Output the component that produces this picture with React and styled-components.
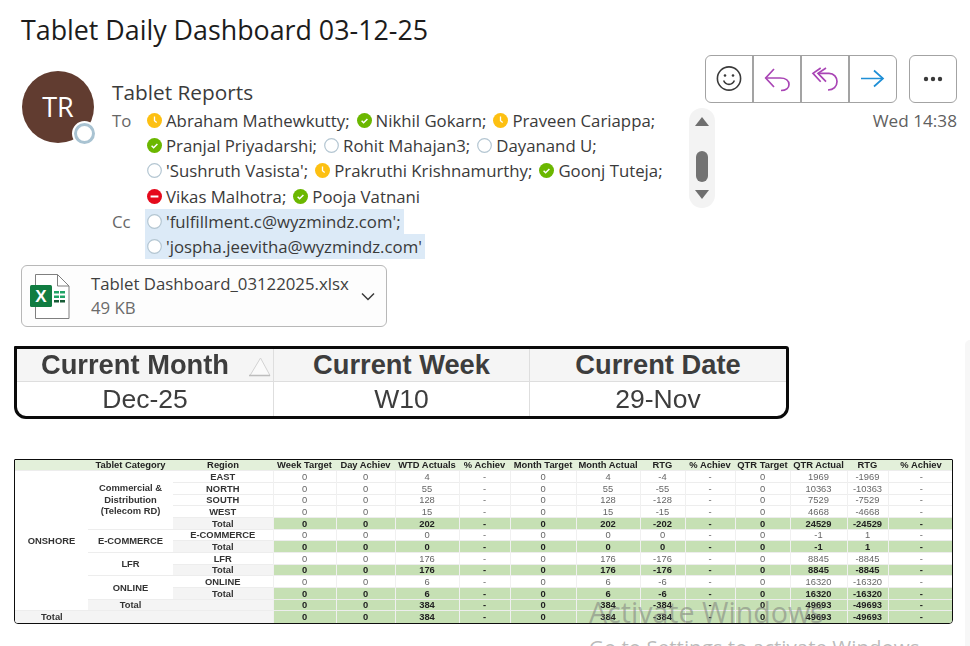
import React from 'react';
import styled, {createGlobalStyle} from 'styled-components';

const GlobalStyle = createGlobalStyle`
	html, body {
		margin: 0;
		padding: 0;
		background: #fff;
		overflow: hidden;
	}
	#root {
		height: 646px;
	}
`;

const Page = styled.div`
	position: relative;
	width: 970px;
	height: 646px;
	overflow: hidden;
	font-family: "Open Sans", "Noto Sans", sans-serif;
	color: #242424;
`;

const Title = styled.h1`
	margin: 0;
	padding: 12px 0 0 21px;
	height: 55px;
	box-sizing: border-box;
	font-size: 26.8px;
	line-height: 36px;
	font-weight: 400;
	color: #1c1c1c;
`;

const Header = styled.div`
	display: flex;
	padding-left: 22px;
	padding-right: 13px;
`;

const Avatar = styled.div`
	position: relative;
	flex: none;
	width: 72px;
	height: 72px;
	margin-top: 16px;
	margin-right: 18px;
	border-radius: 50%;
	background: #613c30;
	color: #fff;
	font-size: 27px;
	line-height: 72px;
	text-align: center;
`;

const AvatarStatus = styled.span`
	position: absolute;
	right: -1px;
	bottom: -1px;
	width: 15px;
	height: 15px;
	border-radius: 50%;
	border: 3px solid #a9c3d2;
	background: #fff;
	box-shadow: 0 0 0 2px #fff;
`;

const Main = styled.div`
	flex: 1;
	min-width: 0;
`;

const SenderRow = styled.div`
	display: flex;
	justify-content: space-between;
	height: 53px;
`;

const Sender = styled.div`
	align-self: flex-end;
	font-size: 20.8px;
	line-height: 26px;
	margin-bottom: 3px;
	color: #3b3b3b;
`;

const Actions = styled.div`
	display: flex;
	gap: 12px;
	height: 48px;
`;

const ButtonGroup = styled.div`
	display: flex;
	box-sizing: border-box;
	width: ${p => p.$width}px;
	border: 1px solid #a3a3a3;
	border-radius: 6px;
	background: #fff;
	overflow: hidden;
`;

const ActionButton = styled.div`
	display: flex;
	flex: 1;
	align-items: center;
	justify-content: center;
	border-left: ${p => (p.$first ? 'none' : '2px solid #a3a3a3')};
`;

const RecipientsRow = styled.div`
	display: flex;
	justify-content: space-between;
`;

const Recipients = styled.div`
	position: relative;
	width: 603px;
	height: 152px;
`;

const Scrollbar = styled.div`
	position: absolute;
	top: 0;
	right: 0;
	width: 26px;
	height: 100px;
	border-radius: 13px;
	background: #f3f3f3;
	display: flex;
	flex-direction: column;
	align-items: center;
`;

const ArrowUp = styled.span`
	margin-top: 9px;
	width: 0;
	height: 0;
	border-left: 7px solid transparent;
	border-right: 7px solid transparent;
	border-bottom: 9px solid #6f6f6f;
`;

const ScrollThumb = styled.span`
	margin-top: 25px;
	width: 12px;
	height: 31px;
	border-radius: 6px;
	background: #737373;
`;

const ArrowDown = styled.span`
	margin-top: 8px;
	width: 0;
	height: 0;
	border-left: 7px solid transparent;
	border-right: 7px solid transparent;
	border-top: 9px solid #6f6f6f;
`;

const Line = styled.div`
	display: flex;
	align-items: center;
	height: 25.2px;
	font-size: 16.8px;
	color: #3a3a3a;
`;

const FieldLabel = styled.span`
	flex: none;
	width: 33px;
	color: #666;
`;

const Person = styled.span`
	display: inline-flex;
	align-items: center;
	gap: 4px;
	margin-right: 5px;
	padding-left: 2px;
	padding-right: ${p => (p.$selected ? '3px' : '0')};
	height: 100%;
	white-space: pre;
	background: ${p => (p.$selected ? '#dceaf7' : 'transparent')};
`;

const Time = styled.div`
	font-size: 17.2px;
	line-height: 26px;
	color: #5f5f5f;
`;

const Attachment = styled.div`
	display: flex;
	align-items: center;
	box-sizing: border-box;
	width: 366px;
	height: 62px;
	margin: 5px 0 0 21px;
	padding: 0 11px 0 8px;
	border: 1px solid #b8b8b8;
	border-radius: 6px;
	background: #fdfdfd;
`;

const FileText = styled.div`
	flex: 1;
	margin-left: 21px;
	font-size: 16.8px;
	line-height: 24px;
	color: #3f3f3f;
`;

const FileSize = styled.div`
	color: #6b6b6b;
`;

const SummaryBox = styled.div`
	box-sizing: border-box;
	width: 775px;
	height: 73px;
	margin: 19px 0 0 14px;
	border: 3px solid #0a0a0a;
	border-radius: 1px 3px 12px 12px;
	overflow: hidden;
	font-family: "Liberation Sans", Arial, sans-serif;
	filter: blur(0.4px);
`;

const SummaryGrid = styled.div`
	display: grid;
	grid-template-columns: 256px 256px 1fr;
	grid-template-rows: 33px 1fr;
	height: 100%;
`;

const SummaryHead = styled.div`
	position: relative;
	display: flex;
	align-items: center;
	justify-content: center;
	padding-right: ${p => (p.$sorted ? '20px' : '0')};
	font-size: 27.3px;
	font-weight: 700;
	color: #3d3d3d;
	background: #f5f5f5;
	border-bottom: 1px solid #dedede;
	border-left: ${p => (p.$first ? 'none' : '1px solid #dedede')};
`;

const SummaryCell = styled.div`
	display: flex;
	align-items: center;
	justify-content: center;
	font-size: 26.5px;
	color: #3d3d3d;
	border-left: ${p => (p.$first ? 'none' : '1px solid #dedede')};
`;

const SortMark = styled.svg`
	position: absolute;
	right: 2px;
	bottom: 4px;
`;

const BigTableBox = styled.div`
	box-sizing: border-box;
	width: 939px;
	height: 165px;
	margin: 40px 0 0 14px;
	border: 1px solid #0d0d0d;
	border-top-width: 1.5px;
	border-radius: 1px 1px 4px 4px;
	overflow: hidden;
	filter: blur(0.35px);
`;

const BigTable = styled.table`
	width: 100%;
	table-layout: fixed;
	border-collapse: collapse;
	font-family: "Liberation Sans", Arial, sans-serif;
	font-size: 9.4px;
	color: #555;
	text-align: center;

	tbody tr:nth-child(3n) {
		height: 11px;
	}
	tbody tr:last-child {
		height: 13px;
	}
`;

const HeadRow = styled.tr`
	height: 10px;
	background: #e3f0da;
`;

const Row = styled.tr`
	height: 12px;
`;

const HeadCell = styled.th`
	padding: 0;
	font-weight: 700;
	color: #222;
	white-space: nowrap;
	line-height: 9px;
`;

const Cell = styled.td`
	padding: 0;
	line-height: 9px;
	border-top: 1px solid #ededed;
	border-left: 1px solid #f0f0f0;
	white-space: nowrap;
	background: ${p => (p.$total ? '#c6e0b4' : 'transparent')};
	font-weight: ${p => (p.$total ? 700 : 400)};
	color: ${p => (p.$total ? '#222' : '#666')};
`;

const GroupCell = styled.td`
	padding: 0;
	padding-left: ${p => p.$indent || 0}px;
	font-weight: 700;
	line-height: 9px;
	color: #333;
	white-space: nowrap;
	border-top: 1px solid #ededed;
	background: ${p => (p.$shade ? '#f4f4f4' : '#fff')};
	text-align: ${p => p.$align || 'center'};
`;

const GroupLines = styled.div`
	line-height: 11.5px;
`;

const Watermark = styled.div`
	position: absolute;
	left: 589px;
	top: 594px;
	color: rgba(120, 120, 120, 0.5);
	pointer-events: none;
`;

const WatermarkTitle = styled.div`
	font-size: 28.6px;
	line-height: 36px;
`;

const WatermarkSub = styled.div`
	margin-top: 3px;
	font-size: 20.5px;
	line-height: 28px;
	white-space: nowrap;
`;

const PageEdge = styled.div`
	position: absolute;
	right: 0;
	top: 340px;
	bottom: 0;
	width: 5px;
	border-top-left-radius: 5px;
	background: #f7f7f7;
`;

// presence dot next to each recipient
const Presence = ({status}) => {
	if (status === 'away') {
		return (
			<svg width="15" height="15" viewBox="0 0 15 15">
				<circle cx="7.5" cy="7.5" r="7.5" fill="#fdc012" />
				<path d="M7.5 3.6v4.2l2.2 1.7" fill="none" stroke="#fff" strokeWidth="1.3" />
			</svg>
		);
	}
	if (status === 'on') {
		return (
			<svg width="15" height="15" viewBox="0 0 15 15">
				<circle cx="7.5" cy="7.5" r="7.5" fill="#6bb700" />
				<path d="M4.6 7.8l2 2 3.8-3.8" fill="none" stroke="#fff" strokeWidth="1.5" />
			</svg>
		);
	}
	if (status === 'dnd') {
		return (
			<svg width="15" height="15" viewBox="0 0 15 15">
				<circle cx="7.5" cy="7.5" r="7.5" fill="#e50a1c" />
				<rect x="3.6" y="6.5" width="7.8" height="2" fill="#fff" />
			</svg>
		);
	}
	return (
		<svg width="15" height="15" viewBox="0 0 15 15">
			<circle cx="7.5" cy="7.5" r="6.8" fill="#fff" stroke="#b4c6d2" strokeWidth="1.2" />
		</svg>
	);
};

const Smiley = () => (
	<svg width="28" height="28" viewBox="0 0 28 28" fill="none" stroke="#3a3a3a" strokeWidth="1.6">
		<circle cx="14" cy="13.500" r="11.6" />
		<circle cx="10" cy="10.500" r="1.3" fill="#3a3a3a" stroke="none" />
		<circle cx="18" cy="10.500" r="1.3" fill="#3a3a3a" stroke="none" />
		<path d="M8.600 15.500c1.200 2.600 3.100 3.900 5.400 3.900s4.200-1.300 5.400-3.900" />
	</svg>
);

const ReplyIcon = () => (
	<svg width="28" height="28" viewBox="0 0 28 28" fill="none" stroke="#a945b5" strokeWidth="1.7">
		<path d="M11 4L2.700 13l8.300 9" />
		<path d="M2.700 13H17c6 0 9 3 9 6.500s-3 6-8 6" />
	</svg>
);

const ReplyAllIcon = () => (
	<svg width="28" height="28" viewBox="0 0 28 28" fill="none" stroke="#a945b5" strokeWidth="1.7">
		<path d="M9.700 3L2 8.300l7.700 8.400" />
		<path d="M15 3L7 8.300l8 8.400" />
		<path d="M7 8.300h11c5 0 8 4 8 8.200 0 5-3.500 8.500-9 8.500" />
	</svg>
);

const ForwardIcon = () => (
	<svg width="28" height="28" viewBox="0 0 28 28" fill="none" stroke="#1f8fd6" strokeWidth="1.7">
		<path d="M2 13.500h22" />
		<path d="M15 5.500l9 8-9 8" />
	</svg>
);

const MoreIcon = () => (
	<svg width="20" height="6" viewBox="0 0 20 6" fill="#3a3a3a">
		<circle cx="3" cy="3" r="2.200" />
		<circle cx="10" cy="3" r="2.200" />
		<circle cx="17" cy="3" r="2.200" />
	</svg>
);

const ExcelIcon = () => (
	<svg width="40" height="45" viewBox="0 0 40 45">
		<path d="M5.500 .5h22l11.500 11.500v32.500h-33.500z" fill="#fff" stroke="#7f7f7f" />
		<path d="M27.500 .5v11.500h11.500" fill="none" stroke="#7f7f7f" />
		<g fill="#21a366">
			<rect x="24" y="17" width="5" height="2.500" />
			<rect x="30" y="17" width="5" height="2.500" />
			<rect x="24" y="21.500" width="5" height="2.500" />
			<rect x="30" y="21.500" width="5" height="2.500" />
		</g>
		<g fill="#185c37">
			<rect x="24" y="26" width="5" height="2.500" />
			<rect x="30" y="26" width="5" height="2.500" />
		</g>
		<rect x="0" y="11" width="22" height="22" rx="1.500" fill="#107c41" />
		<text x="11" y="28" textAnchor="middle" fontFamily="'Liberation Sans', Arial, sans-serif" fontWeight="700" fontSize="17" fill="#fff">X</text>
	</svg>
);

const Chevron = () => (
	<svg width="14" height="9" viewBox="0 0 14 9" fill="none" stroke="#3a3a3a" strokeWidth="1.500">
		<path d="M1 1.500l6 6 6-6" />
	</svg>
);

const toLines = [
	[['away', 'Abraham Mathewkutty;'], ['on', 'Nikhil Gokarn;'], ['away', 'Praveen Cariappa;']],
	[['on', 'Pranjal Priyadarshi;'], ['off', 'Rohit Mahajan3;'], ['off', 'Dayanand U;']],
	[['off', "'Sushruth Vasista';"], ['away', 'Prakruthi Krishnamurthy;'], ['on', 'Goonj Tuteja;']],
	[['dnd', 'Vikas Malhotra;'], ['on', 'Pooja Vatnani']],
];

const ccLines = ["'fulfillment.c@wyzmindz.com';", "'jospha.jeevitha@wyzmindz.com'"];

const colWidths = [73, 85, 100, 63, 59, 64, 51, 66, 64, 45, 50, 55, 57, 41, 66];

const headers = ['', 'Tablet Category', 'Region', 'Week Target', 'Day Achiev', 'WTD Actuals', '% Achiev', 'Month Target', 'Month Actual', 'RTG', '% Achiev', 'QTR Target', 'QTR Actual', 'RTG', '% Achiev'];

const metrics = (wtd, month, rtg, qtr, qrtg) => ['0', '0', wtd, '-', '0', month, rtg, '-', '0', qtr, qrtg, '-'];

const MetricCells = ({values, total}) => values.map((v, i) => (
	<Cell key={i} $total={total}>{v}</Cell>
));

const App = () => (
	<Page>
		<GlobalStyle />
		<Title>Tablet Daily Dashboard 03-12-25</Title>
		<Header>
			<Avatar>
				TR
				<AvatarStatus />
			</Avatar>
			<Main>
				<SenderRow>
					<Sender>Tablet Reports</Sender>
					<Actions>
						<ButtonGroup $width={192}>
							<ActionButton $first><Smiley /></ActionButton>
							<ActionButton><ReplyIcon /></ActionButton>
							<ActionButton><ReplyAllIcon /></ActionButton>
							<ActionButton><ForwardIcon /></ActionButton>
						</ButtonGroup>
						<ButtonGroup $width={48}>
							<ActionButton $first><MoreIcon /></ActionButton>
						</ButtonGroup>
					</Actions>
				</SenderRow>
				<RecipientsRow>
					<Recipients>
						{toLines.map((line, i) => (
							<Line key={i}>
								<FieldLabel>{i === 0 ? 'To' : ''}</FieldLabel>
								{line.map(([status, name]) => (
									<Person key={name}><Presence status={status} />{name}</Person>
								))}
							</Line>
						))}
						{ccLines.map((name, i) => (
							<Line key={name}>
								<FieldLabel>{i === 0 ? 'Cc' : ''}</FieldLabel>
								<Person $selected><Presence status="off" />{name}</Person>
							</Line>
						))}
						<Scrollbar>
							<ArrowUp />
							<ScrollThumb />
							<ArrowDown />
						</Scrollbar>
					</Recipients>
					<Time>Wed 14:38</Time>
				</RecipientsRow>
			</Main>
		</Header>
		<Attachment>
			<ExcelIcon />
			<FileText>
				Tablet Dashboard_03122025.xlsx
				<FileSize>49 KB</FileSize>
			</FileText>
			<Chevron />
		</Attachment>
		<SummaryBox>
			<SummaryGrid>
				<SummaryHead $first $sorted>
					Current Month
					<SortMark width="22" height="20" viewBox="0 0 22 20">
						<path d="M1 18.500h20L11.500 1z" fill="#fafafa" stroke="#d2d2d2" />
						<path d="M0 18.500h21" stroke="#bdbdbd" strokeWidth="1.500" />
					</SortMark>
				</SummaryHead>
				<SummaryHead>Current Week</SummaryHead>
				<SummaryHead>Current Date</SummaryHead>
				<SummaryCell $first>Dec-25</SummaryCell>
				<SummaryCell>W10</SummaryCell>
				<SummaryCell>29-Nov</SummaryCell>
			</SummaryGrid>
		</SummaryBox>
		<BigTableBox>
			<BigTable>
				<colgroup>
					{colWidths.map((w, i) => <col key={i} width={w} />)}
				</colgroup>
				<thead>
					<HeadRow>
						{headers.map((h, i) => <HeadCell key={i}>{h}</HeadCell>)}
					</HeadRow>
				</thead>
				<tbody>
					<Row>
						<GroupCell rowSpan={12}>ONSHORE</GroupCell>
						<GroupCell rowSpan={5}><GroupLines>Commercial &<br />Distribution<br />(Telecom RD)</GroupLines></GroupCell>
						<GroupCell>EAST</GroupCell>
						<MetricCells values={metrics('4', '4', '-4', '1969', '-1969')} />
					</Row>
					<Row>
						<GroupCell>NORTH</GroupCell>
						<MetricCells values={metrics('55', '55', '-55', '10363', '-10363')} />
					</Row>
					<Row>
						<GroupCell>SOUTH</GroupCell>
						<MetricCells values={metrics('128', '128', '-128', '7529', '-7529')} />
					</Row>
					<Row>
						<GroupCell>WEST</GroupCell>
						<MetricCells values={metrics('15', '15', '-15', '4668', '-4668')} />
					</Row>
					<Row>
						<GroupCell $shade>Total</GroupCell>
						<MetricCells total values={metrics('202', '202', '-202', '24529', '-24529')} />
					</Row>
					<Row>
						<GroupCell rowSpan={2}>E-COMMERCE</GroupCell>
						<GroupCell>E-COMMERCE</GroupCell>
						<MetricCells values={metrics('0', '0', '0', '-1', '1')} />
					</Row>
					<Row>
						<GroupCell $shade>Total</GroupCell>
						<MetricCells total values={metrics('0', '0', '0', '-1', '1')} />
					</Row>
					<Row>
						<GroupCell rowSpan={2}>LFR</GroupCell>
						<GroupCell>LFR</GroupCell>
						<MetricCells values={metrics('176', '176', '-176', '8845', '-8845')} />
					</Row>
					<Row>
						<GroupCell $shade>Total</GroupCell>
						<MetricCells total values={metrics('176', '176', '-176', '8845', '-8845')} />
					</Row>
					<Row>
						<GroupCell rowSpan={2}>ONLINE</GroupCell>
						<GroupCell>ONLINE</GroupCell>
						<MetricCells values={metrics('6', '6', '-6', '16320', '-16320')} />
					</Row>
					<Row>
						<GroupCell $shade>Total</GroupCell>
						<MetricCells total values={metrics('6', '6', '-6', '16320', '-16320')} />
					</Row>
					<Row>
						<GroupCell $shade>Total</GroupCell>
						<GroupCell $shade />
						<MetricCells total values={metrics('384', '384', '-384', '49693', '-49693')} />
					</Row>
					<Row>
						<GroupCell $shade colSpan={3} $align="left" $indent={26}>Total</GroupCell>
						<MetricCells total values={metrics('384', '384', '-384', '49693', '-49693')} />
					</Row>
				</tbody>
			</BigTable>
		</BigTableBox>
		<PageEdge />
		<Watermark>
			<WatermarkTitle>Activate Windows</WatermarkTitle>
			<WatermarkSub>Go to Settings to activate Windows.</WatermarkSub>
		</Watermark>
	</Page>
);

export default App;
